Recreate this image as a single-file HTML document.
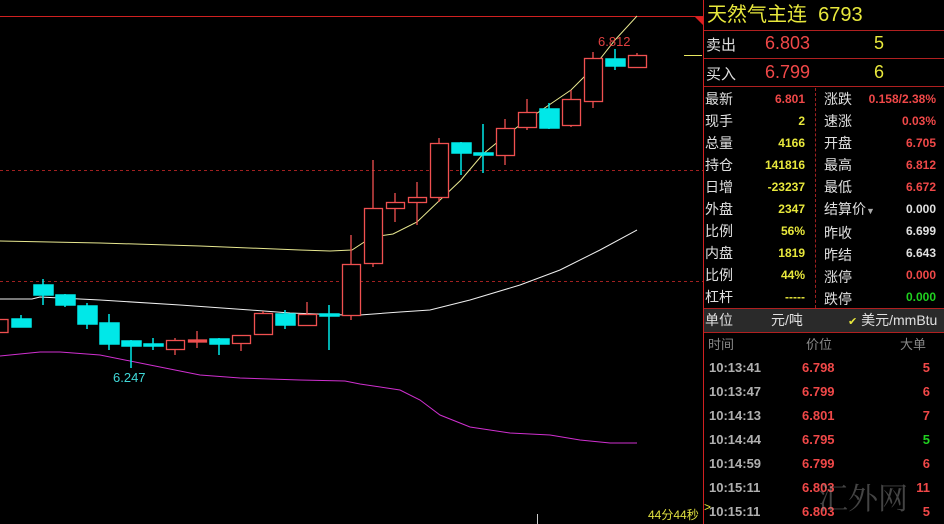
<!DOCTYPE html><html><head><meta charset="utf-8"><style>
body{margin:0;width:944px;height:524px;background:#000;overflow:hidden;position:relative;font-family:"Liberation Sans","Noto Sans CJK SC",sans-serif}
.a{position:absolute;white-space:nowrap}
.lb{color:#e0e0e0;font-size:14px}
.b{font-weight:bold;font-size:12px;text-align:right}
.r{color:#f04848}.y{color:#e8e83c}.w{color:#e0e0e0}.g{color:#20d020}
</style></head><body>
<svg class="a" style="left:0;top:0" width="704" height="524">
<line x1="0" y1="16.5" x2="703" y2="16.5" stroke="#d02020"/>
<polygon points="695,17 703,17 703,25" fill="#e02020"/>
<line x1="0" y1="170.5" x2="703" y2="170.5" stroke="#a02020" stroke-dasharray="3,3"/>
<line x1="0" y1="281.5" x2="703" y2="281.5" stroke="#a02020" stroke-dasharray="3,3"/>
<line x1="684" y1="55.5" x2="702" y2="55.5" stroke="#e8e860"/>
<line x1="537.5" y1="514" x2="537.5" y2="524" stroke="#ccc"/>
<polyline fill="none" stroke="#e8e890" points="0,241 100,243 200,246 300,250 330,251 352,250 372,237 393,234 417,222 440,200 461,180 483,154 505,136 527,120 549,105 571,90 593,68 615,40 637,16"/>
<polyline fill="none" stroke="#f0f0f0" points="0,299 32,299 40,297 100,300 180,305 250,310 290,313 345,315 360,315 400,312 430,310 470,300 520,285 560,270 600,250 637,230"/>
<polyline fill="none" stroke="#d030d0" points="0,356 40,352 60,352 100,355 150,365 200,375 240,378 300,380 345,381 360,384 400,390 420,400 440,415 470,427 510,433 550,435 580,440 610,443 637,443"/>
<g stroke-width="1.5">
<g stroke="#00e8e8" fill="#00e8e8">
<line x1="21" y1="315" x2="21" y2="327"/><rect x="12" y="319" width="19" height="8"/>
<line x1="43" y1="279" x2="43" y2="305"/><rect x="34" y="285" width="19" height="10"/>
<line x1="65" y1="294" x2="65" y2="307"/><rect x="56" y="295" width="19" height="10"/>
<line x1="87" y1="303" x2="87" y2="329"/><rect x="78" y="306" width="19" height="18"/>
<line x1="109" y1="314" x2="109" y2="350"/><rect x="100" y="323" width="19" height="21"/>
<line x1="131" y1="340" x2="131" y2="368"/><rect x="122" y="341" width="19" height="5"/>
<line x1="153" y1="338" x2="153" y2="350"/><rect x="144" y="344" width="19" height="2"/>
<line x1="219" y1="338" x2="219" y2="355"/><rect x="210" y="339" width="19" height="5"/>
<line x1="285" y1="310" x2="285" y2="329"/><rect x="276" y="314" width="19" height="11"/>
<line x1="329" y1="305" x2="329" y2="350"/><rect x="320" y="314" width="19" height="2"/>
<line x1="461" y1="142" x2="461" y2="175"/><rect x="452" y="143" width="19" height="10"/>
<line x1="483" y1="124" x2="483" y2="173"/><rect x="474" y="153" width="19" height="2"/>
<line x1="549" y1="103" x2="549" y2="129"/><rect x="540" y="109" width="19" height="19"/>
<line x1="615" y1="49" x2="615" y2="70"/><rect x="606" y="59" width="19" height="7"/>
</g>
<g stroke="#f05050" fill="#000" stroke-width="1.3">
<rect x="-10" y="319.5" width="18" height="13"/>
<line x1="175" y1="338" x2="175" y2="355"/><rect x="166.5" y="340.5" width="18" height="9"/>
<line x1="197" y1="331" x2="197" y2="348"/><rect x="188.5" y="340" width="18" height="2" fill="#f05050"/>
<line x1="241" y1="335" x2="241" y2="351"/><rect x="232.5" y="335.5" width="18" height="8"/>
<line x1="263" y1="311" x2="263" y2="334"/><rect x="254.5" y="313.5" width="18" height="21"/>
<line x1="307" y1="302" x2="307" y2="326"/><rect x="298.5" y="314.5" width="18" height="11"/>
<line x1="351" y1="235" x2="351" y2="320"/><rect x="342.5" y="264.5" width="18" height="51"/>
<line x1="373" y1="160" x2="373" y2="267"/><rect x="364.5" y="208.5" width="18" height="55"/>
<line x1="395" y1="193" x2="395" y2="222"/><rect x="386.5" y="202.5" width="18" height="6"/>
<line x1="417" y1="182" x2="417" y2="225"/><rect x="408.5" y="197.5" width="18" height="5"/>
<line x1="439" y1="138" x2="439" y2="202"/><rect x="430.5" y="143.5" width="18" height="54"/>
<line x1="505" y1="119" x2="505" y2="165"/><rect x="496.5" y="128.5" width="18" height="27"/>
<line x1="527" y1="99" x2="527" y2="130"/><rect x="518.5" y="112.5" width="18" height="15"/>
<line x1="571" y1="90" x2="571" y2="127"/><rect x="562.5" y="99.5" width="18" height="26"/>
<line x1="593" y1="52" x2="593" y2="108"/><rect x="584.5" y="58.5" width="18" height="43"/>
<line x1="637" y1="53" x2="637" y2="67"/><rect x="628.5" y="55.5" width="18" height="12"/>
</g></g>
<text x="113" y="382" fill="#40d8d8" font-size="13" font-family="Liberation Sans">6.247</text>
<text x="598" y="46" fill="#e04040" font-size="13" font-family="Liberation Sans">6.812</text>
<text x="648" y="519" fill="#e0e040" font-size="12" font-family="Liberation Sans,Noto Sans CJK SC">44分44秒</text>
<line x1="703.5" y1="0" x2="703.5" y2="524" stroke="#d02020"/>
</svg>
<div class="a" style="left:704px;top:0;width:240px;height:524px">
<div class="a" style="left:0;top:30px;width:240px;height:1px;background:#b02020"></div>
<div class="a" style="left:0;top:58px;width:240px;height:1px;background:#b02020"></div>
<div class="a" style="left:0;top:86px;width:240px;height:1px;background:#b02020"></div>
<div class="a" style="left:0;top:308px;width:240px;height:1px;background:#b02020"></div>
<div class="a" style="left:0;top:309px;width:240px;height:23px;background:#2a2a2a"></div>
<div class="a" style="left:0;top:332px;width:240px;height:1px;background:#b02020"></div>
<div class="a" style="left:111px;top:88px;height:220px;border-left:1px dashed #a02020"></div>
<div class="a y" style="left:3px;top:2px;font-size:20px;line-height:26px">天然气主连&nbsp; 6793</div>
<div class="a lb" style="left:2px;top:34px;font-size:15px">卖出</div>
<div class="a r" style="left:61px;top:33px;font-size:18px">6.803</div>
<div class="a y" style="left:170px;top:33px;font-size:18px">5</div>
<div class="a lb" style="left:2px;top:63px;font-size:15px">买入</div>
<div class="a r" style="left:61px;top:62px;font-size:18px">6.799</div>
<div class="a y" style="left:170px;top:62px;font-size:18px">6</div>
</div>
<div class="a" style="left:705px;top:88px;width:239px;font-size:14px;line-height:22px">
<div class="a lb" style="left:0;top:0">最新<br>现手<br>总量<br>持仓<br>日增<br>外盘<br>比例<br>内盘<br>比例<br>杠杆</div>
<div class="a b" style="left:30px;width:70px;top:0;line-height:22px"><span class="r">6.801</span><br><span class="y">2<br>4166<br>141816<br>-23237<br>2347<br>56%<br>1819<br>44%<br>-----</span></div>
<div class="a lb" style="left:119px;top:0">涨跌<br>速涨<br>开盘<br>最高<br>最低<br>结算价<span style="color:#aaa;font-size:9px">▼</span><br>昨收<br>昨结<br>涨停<br>跌停</div>
<div class="a b" style="left:150px;width:81px;top:0;line-height:22px"><span class="r">0.158/2.38%<br>0.03%<br>6.705<br>6.812<br>6.672</span><br><span class="w">0.000<br>6.699<br>6.643</span><br><span class="r">0.000</span><br><span class="g">0.000</span></div>
<div class="a lb" style="left:0;top:221px">单位</div>
<div class="a lb" style="left:66px;top:221px">元/吨</div>
<div class="a lb" style="left:143px;top:221px"><span class="y" style="font-size:11px">✔</span> 美元/mmBtu</div>
</div>
<div class="a" style="left:708px;top:336px;font-size:13px;color:#888;line-height:18px">时间</div>
<div class="a" style="left:806px;top:336px;font-size:13px;color:#888;line-height:18px">价位</div>
<div class="a" style="left:900px;top:336px;font-size:13px;color:#888;line-height:18px">大单</div>
<div class="a" style="left:709px;top:356px;font-size:13px;font-weight:bold;line-height:24px;color:#b0b0b0">10:13:41<br>10:13:47<br>10:14:13<br>10:14:44<br>10:14:59<br>10:15:11<br>10:15:11</div>
<div class="a r" style="left:802px;top:356px;font-size:13px;font-weight:bold;line-height:24px">6.798<br>6.799<br>6.801<br>6.795<br>6.799<br>6.803<br>6.803</div>
<div class="a" style="left:880px;width:50px;text-align:right;top:356px;font-size:13px;font-weight:bold;line-height:24px"><span class="r">5<br>6<br>7</span><br><span class="g">5</span><br><span class="r">6<br>11<br>5</span></div>
<div class="a y" style="left:704px;top:500px;font-size:12px">&gt;</div>
<div class="a" style="left:818px;top:474px;font-size:30px;color:rgba(150,150,150,0.45);font-family:'Noto Serif CJK SC',serif">汇外网</div>
</body></html>
